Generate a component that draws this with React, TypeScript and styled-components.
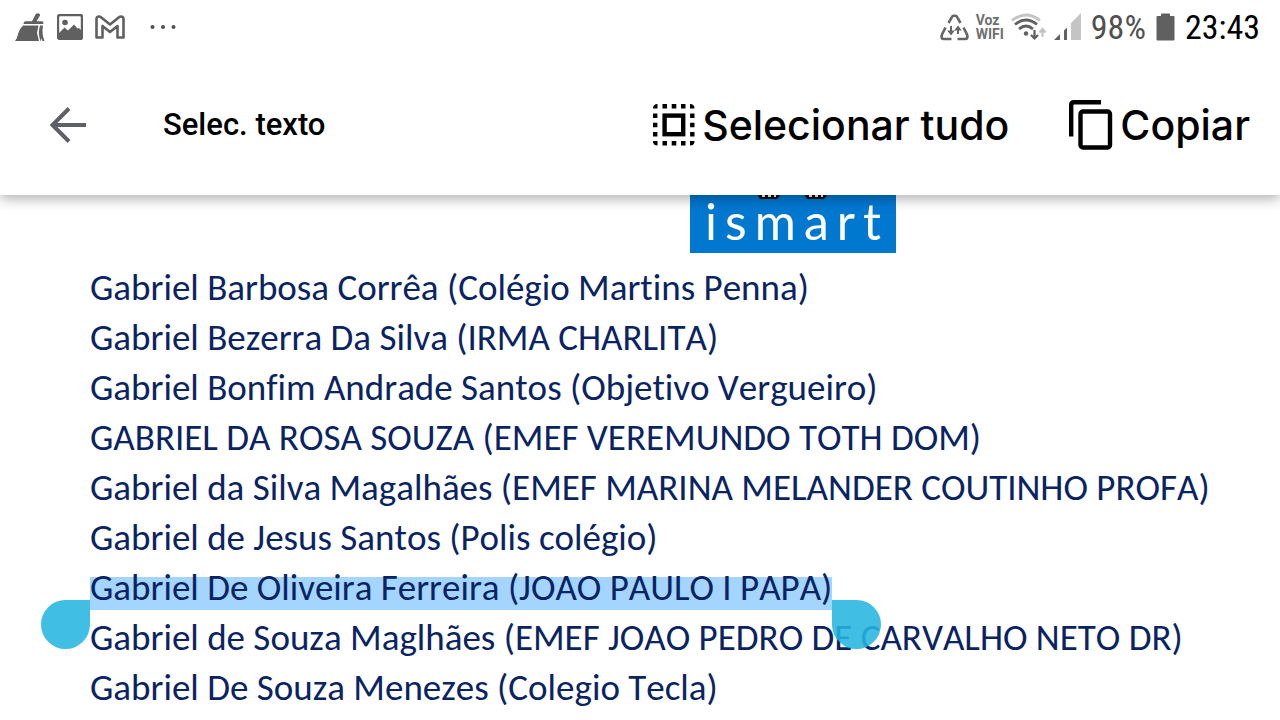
import React from "react";
import styled, { createGlobalStyle } from "styled-components";

const GlobalStyle = createGlobalStyle`
  * { box-sizing: border-box; }
  body {
    margin: 0;
    background: #fff;
    color: #000;
    font-family: Roboto, "Liberation Sans", sans-serif;
    overflow: hidden;
  }
`;

const Screen = styled.div`
  display: flex;
  flex-direction: column;
  height: 100vh;
  overflow: hidden;
`;

const TopArea = styled.header`
  position: relative;
  z-index: 1;
  flex: none;
  background: #fff;
  box-shadow: 0 4px 12px rgba(0, 0, 0, 0.3);
`;

const StatusBar = styled.div`
  display: flex;
  align-items: center;
  justify-content: space-between;
  height: 54px;
  padding: 0 20px 0 15px;
  color: #606060;
`;

const StatusGroup = styled.div<{ $gap: number }>`
  display: flex;
  align-items: center;
  gap: ${(p) => p.$gap}px;
`;

const CallLabel = styled.span`
  display: flex;
  flex-direction: column;
  font: 700 14px/14px Roboto, sans-serif;
  color: #707070;
`;

const Reading = styled.span<{ $strong?: boolean }>`
  font: 400 34px/36px "Roboto Condensed", Roboto, sans-serif;
  color: ${(p) => (p.$strong ? "#000" : "#505050")};
`;

const AppBar = styled.nav`
  display: flex;
  align-items: center;
  height: 141px;
  padding: 0 30px 0 46px;
`;

const BarButton = styled.button`
  display: flex;
  align-items: center;
  gap: 7px;
  padding: 0;
  border: 0;
  background: none;
  color: #000;
  font: 500 41px/56px Inter, sans-serif;
  cursor: pointer;
`;

const Title = styled.h1`
  flex: 1;
  margin: 0 0 0 73px;
  font-size: 31px;
  line-height: 40px;
  font-weight: 500;
`;

const Actions = styled.div`
  display: flex;
  align-items: center;
  gap: 60px;
`;

const Page = styled.main`
  flex: 1;
  padding-left: 90px;
`;

const Logo = styled.div`
  position: relative;
  display: flex;
  justify-content: center;
  width: 206px;
  height: 58px;
  margin-left: 600px;
  padding-left: 8px;
  background: #0078d0;
  color: #fff;
  font: 400 50px/52px Lato, sans-serif;
  letter-spacing: 8px;
`;

const LogoFigures = styled.svg`
  position: absolute;
  top: 0;
  left: 66px;
`;

const Names = styled.ul`
  margin: 10px 0 0;
  padding: 0;
  list-style: none;
  color: #0a2463;
  font: 400 37px/50px Carlito, "Open Sans", sans-serif;
  font-kerning: none;
  font-variant-ligatures: none;
  white-space: nowrap;
`;

const Selection = styled.mark`
  position: relative;
  display: inline-block;
  color: inherit;
  background: linear-gradient(#a3d5ff, #a3d5ff) 0 14px / 100% 33px no-repeat;
`;

const Handle = styled.span<{ $side: "start" | "end" }>`
  position: absolute;
  top: 37px;
  ${(p) => (p.$side === "start" ? "right: 100%;" : "left: 100%;")}
  width: 49px;
  height: 49px;
  background: rgba(38, 181, 224, 0.88);
  border-radius: ${(p) => (p.$side === "start" ? "50% 0 50% 50%" : "0 50% 50% 50%")};
`;

const names = [
  "Gabriel Barbosa Corrêa (Colégio Martins Penna)",
  "Gabriel Bezerra Da Silva (IRMA CHARLITA)",
  "Gabriel Bonfim Andrade Santos (Objetivo Vergueiro)",
  "GABRIEL DA ROSA SOUZA (EMEF VEREMUNDO TOTH DOM)",
  "Gabriel da Silva Magalhães (EMEF MARINA MELANDER COUTINHO PROFA)",
  "Gabriel de Jesus Santos (Polis colégio)",
  "Gabriel De Oliveira Ferreira (JOAO PAULO I PAPA)",
  "Gabriel de Souza Maglhães (EMEF JOAO PEDRO DE CARVALHO NETO DR)",
  "Gabriel De Souza Menezes (Colegio Tecla)",
];
const selectedIndex = 6;

const CleanerIcon = () => (
  <svg width="30" height="29" viewBox="0 0 30 29" fill="#606060">
    <path d="M20.500 1.500Q22 -0.500 24.500 0.800Q25.500 1.800 24.600 3.200L21.500 8.300H27Q29 8.500 28.200 11H8.500Q8.500 8.500 10.500 8.300H17Z" />
    <path d="M8 12.500H23.500L22 20L24 28H0Q2.500 25 3 21Q4.500 15.500 8 12.500Z" />
    <path d="M25 12.500H28Q26.500 21 29.500 28H27.500L26 25V28H25.500Q22.500 20 25 12.500Z" />
  </svg>
);

const PictureIcon = () => (
  <svg width="26" height="26" viewBox="0 0 26 26">
    <rect x="1" y="1" width="24" height="24" rx="2" fill="none" stroke="#606060" strokeWidth="2.400" />
    <circle cx="8" cy="8.500" r="2.800" fill="#606060" />
    <path d="M1 20L7.500 13.500L11 16.500L17 10.500L20.500 14.500L22 14L25 17V25H1Z" fill="#606060" />
  </svg>
);

const MailIcon = () => (
  <svg width="30" height="24" viewBox="0 0 30 24" fill="none" stroke="#606060" strokeWidth="2.600" strokeLinejoin="round">
    <path d="M1.500 4Q1.500 1.500 4 1.500Q5 1.500 6 2.300L15 9.500L24 2.300Q25 1.500 26 1.500Q28.500 1.500 28.500 4V22.500H22.500V11L15 17L7.500 11V22.500H1.500Z" />
  </svg>
);

const MoreIcon = () => (
  <svg width="28" height="6" viewBox="0 0 28 6" fill="#505050">
    <circle cx="3.500" cy="3" r="2" /><circle cx="14" cy="3" r="2" /><circle cx="24.500" cy="3" r="2" />
  </svg>
);

const DataSaverIcon = () => (
  <svg width="29" height="27" viewBox="0 0 29 27" fill="none" stroke="#666" strokeWidth="2.600">
    <path d="M8.500 9L12 2.800Q12.500 1.800 13.500 1.800H15.500Q16.500 1.800 17 2.800L20.500 9" />
    <path d="M5.500 13.500L2 20.500Q0.500 25 4 25H11.500M23.500 13.500L27 20.500Q28.500 25 25 25H17.500" />
    <path d="M11 12V18M18 20V14" strokeWidth="2" />
    <path d="M7.200 16.500H14.800L11 21.500ZM14.200 16.500H21.800L18 11.500Z" fill="#666" stroke="none" />
  </svg>
);

const WifiIcon = () => (
  <svg width="36" height="28" viewBox="0 0 36 28" fill="none" strokeWidth="2.800">
    <path d="M1 7.500Q15 -3.500 29 7.500" stroke="#c4c4c4" />
    <path d="M4 11.500Q15 2.500 26 11.500M8 16Q15 10 22 16" stroke="#606060" />
    <circle cx="15" cy="20.500" r="2.200" fill="#606060" />
    <path d="M23.500 17V25M20 22L23.500 25.500L27 22" stroke="#606060" strokeWidth="2.200" />
    <path d="M31.500 24V17M28.500 19.500L31.500 16L34.500 19.500" stroke="#c4c4c4" strokeWidth="2.200" />
  </svg>
);

const SignalIcon = () => (
  <svg width="27" height="28" viewBox="0 0 27 28">
    <path d="M0 27L6 21V27ZM10 17.500L13 14.500V27H10Z" fill="#606060" />
    <path d="M17 10L27 0V27H17Z" fill="#c4c4c4" />
  </svg>
);

const BatteryIcon = () => (
  <svg width="19" height="28" viewBox="0 0 19 28" fill="#606060">
    <path d="M5 3V1.500Q5 0.500 6 0.500H13Q14 0.500 14 1.500V3H17.500Q18.500 3 18.500 4V26.500Q18.500 27.500 17.500 27.500H1.500Q0.500 27.500 0.500 26.500V4Q0.500 3 1.500 3Z" />
  </svg>
);

const BackIcon = () => (
  <svg width="44" height="44" viewBox="0 0 44 44" fill="none" stroke="#5f6065" strokeWidth="4">
    <path d="M40 22H7M23 5.500L6.500 22L23 38.500" />
  </svg>
);

const SelectAllIcon = () => (
  <svg width="42" height="42" viewBox="0 0 42 42">
    <path d="M9.500 2.200H14M18.700 2.200H23.300M28 2.200H32.500M9.500 39.300H14M18.700 39.300H23.300M28 39.300H32.500M2.200 9.500V14M2.200 18.700V23.300M2.200 28V32.500M39.300 9.500V14M39.300 18.700V23.300M39.300 28V32.500" stroke="#000" strokeWidth="4.400" />
    <path d="M0 4.500Q0 0 4.500 0V4.500ZM37 0Q41.500 0 41.500 4.500H37ZM0 37H4.500V41.500Q0 41.500 0 37ZM37 37H41.500Q41.500 41.500 37 41.500Z" />
    <rect x="11.600" y="11.600" width="18.600" height="18.600" fill="none" stroke="#000" strokeWidth="4.400" />
  </svg>
);

const CopyIcon = () => (
  <svg width="44" height="50" viewBox="0 0 44 50" fill="none" stroke="#000" strokeWidth="4.400">
    <path d="M2.200 36.500V5Q2.200 2.200 5 2.200H32" />
    <rect x="11.500" y="11.500" width="29.500" height="36" rx="2.500" />
  </svg>
);

const App: React.FC = () => (
  <Screen>
    <GlobalStyle />
    <TopArea>
      <StatusBar>
        <StatusGroup $gap={24}>
          <StatusGroup $gap={12}>
            <CleanerIcon />
            <PictureIcon />
            <MailIcon />
          </StatusGroup>
          <MoreIcon />
        </StatusGroup>
        <StatusGroup $gap={10}>
          <StatusGroup $gap={7}>
            <DataSaverIcon />
            <CallLabel><span>Voz</span><span>WIFI</span></CallLabel>
            <WifiIcon />
            <SignalIcon />
          </StatusGroup>
          <Reading>98%</Reading>
          <BatteryIcon />
          <Reading as="time" $strong>23:43</Reading>
        </StatusGroup>
      </StatusBar>
      <AppBar>
        <BarButton aria-label="Voltar"><BackIcon /></BarButton>
        <Title>Selec. texto</Title>
        <Actions>
          <BarButton><SelectAllIcon />Selecionar tudo</BarButton>
          <BarButton><CopyIcon />Copiar</BarButton>
        </Actions>
      </AppBar>
    </TopArea>
    <Page>
      <Logo>
        <LogoFigures width="72" height="5" viewBox="0 0 72 5">
          <path d="M2 0H24Q22 5 18 4H7Q3 5 2 0ZM49 0H71Q69 5 65 4H54Q50 5 49 0Z" fill="#111" />
          <path d="M6 1H9M12 1H15M18 1H20M53 1H56M59 1H62M65 1H67" stroke="#fff" strokeWidth="2" />
        </LogoFigures>
        ismart
      </Logo>
      <Names>
        {names.map((name, i) => (
          <li key={name}>
            {i === selectedIndex ? (
              <Selection>
                {name}
                <Handle $side="start" />
                <Handle $side="end" />
              </Selection>
            ) : (
              name
            )}
          </li>
        ))}
      </Names>
    </Page>
  </Screen>
);

export default App;
